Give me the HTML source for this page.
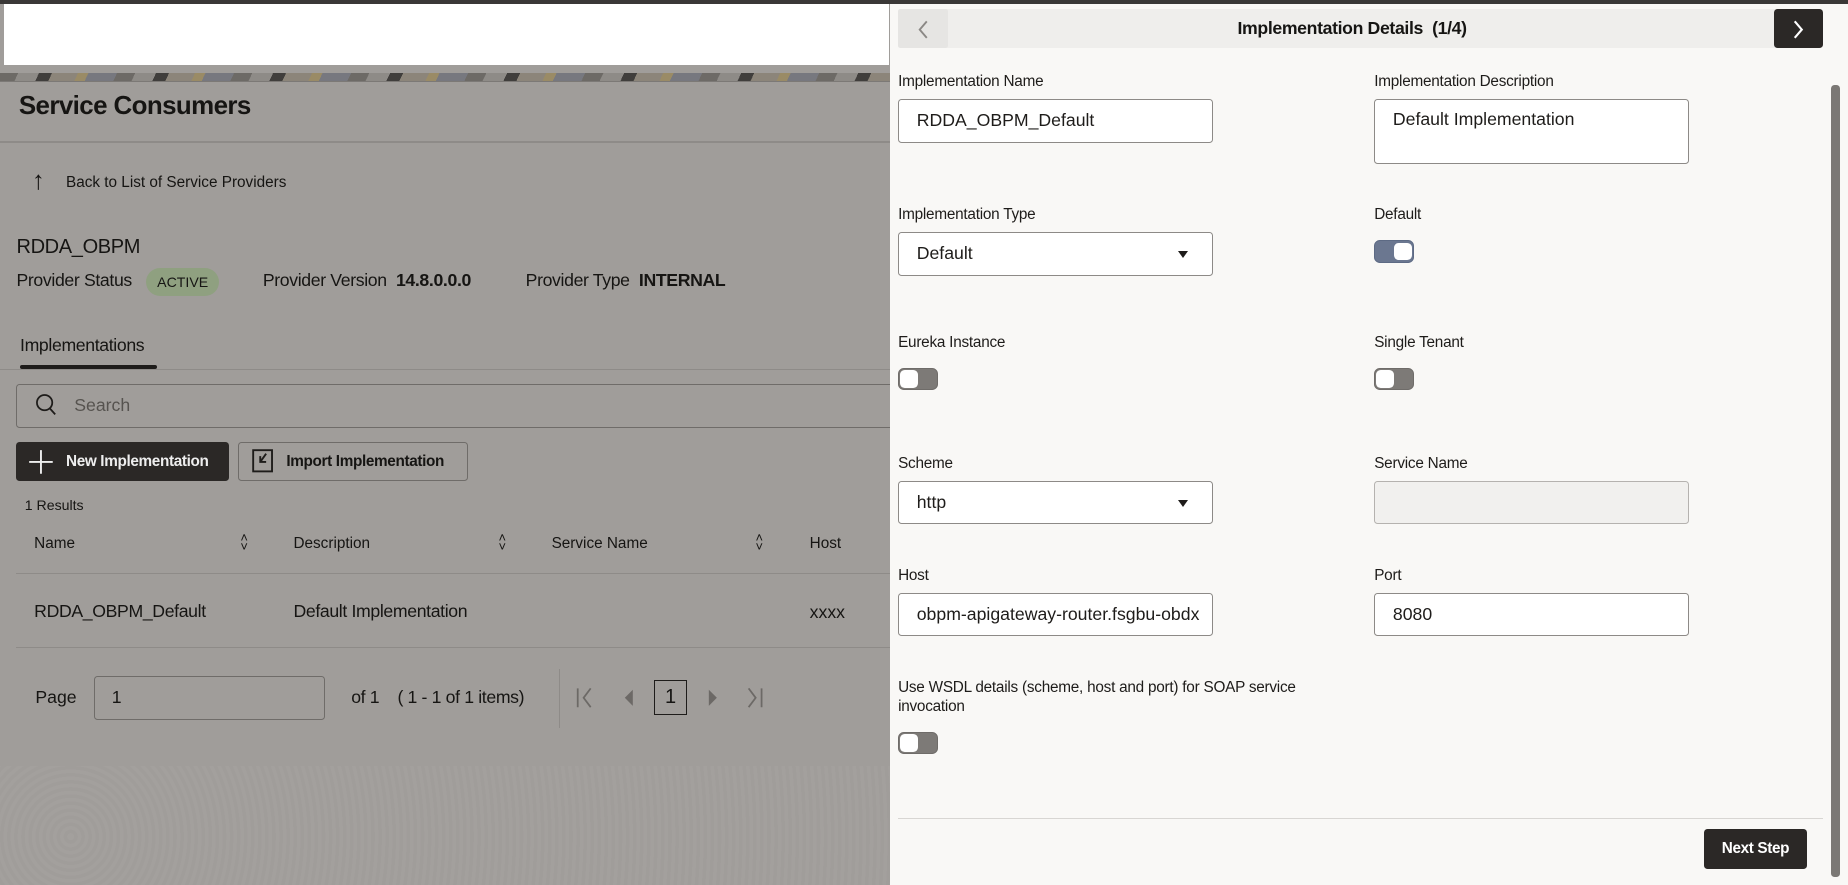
<!DOCTYPE html>
<html><head><meta charset="utf-8"><style>
html{zoom:1.17857}
*{box-sizing:border-box;margin:0;padding:0}
body{width:1568px;height:751px;overflow:hidden;position:relative;background:#a09d9a;font-family:"Liberation Sans",sans-serif;color:#161513}
.a{position:absolute}
.t{position:absolute;white-space:nowrap}
.lbl{font-size:13px;color:#1e1c1a;letter-spacing:-0.2px}
.inp{position:absolute;background:#fff;border:1px solid #8d8a87;border-radius:3px;font-size:15px;padding-left:15px;color:#1e1c1a;overflow:hidden;white-space:nowrap}
.tog{position:absolute;width:34px;height:19px;border-radius:5px;background:#7d7a77;border:1px solid #6f6c69}
.tog::after{content:"";position:absolute;left:1px;top:1px;width:15px;height:15px;border-radius:4px;background:#fff}
.tog.on{background:#6b7790;border-color:#5d6a84}
.tog.on::after{left:16px}
.caret{position:absolute;right:20px;top:15px;width:0;height:0;border-left:5px solid transparent;border-right:5px solid transparent;border-top:6px solid #1e1c1a}
</style></head><body>
<div class="a" style="left:0;top:0;width:1568px;height:3px;background:#3a3837"></div>
<div class="a" style="left:3px;top:3px;width:751px;height:52px;background:#fff"></div>
<div class="a" style="left:0;top:62px;width:755px;height:7px;background:repeating-linear-gradient(115deg,#6d6a66 0 14px,#8e8b87 14px 30px,#403e3c 30px 40px,#8c857a 40px 60px,#9a8b66 60px 68px,#77787f 68px 90px)"></div>
<div class="a" style="left:0;top:69px;width:755px;height:1px;background:#7c7976"></div>
<div class="a" style="left:0;top:650px;width:755px;height:101px;background:repeating-radial-gradient(circle at 60px 60px,#a3a09d 0 3px,#a09d9a 3px 6px)"></div>
<div class="t" style="left:16px;top:78px;font-size:22px;font-weight:bold;letter-spacing:-0.5px">Service Consumers</div>
<div class="a" style="left:0;top:120px;width:755px;height:1px;background:#8e8b88"></div>
<div class="t" style="left:27px;top:142px;font-size:22px">↑</div>
<div class="t" style="left:56px;top:148px;font-size:13px">Back to List of Service Providers</div>
<div class="t" style="left:14px;top:200px;font-size:17px;letter-spacing:-0.3px">RDDA_OBPM</div>
<div class="t" style="left:14px;top:229px;font-size:15px;letter-spacing:-0.3px">Provider Status</div>
<div class="a" style="left:124px;top:227px;width:62px;height:24px;border-radius:12px;background:#8fa080;font-size:12px;text-align:center;line-height:24px">ACTIVE</div>
<div class="t" style="left:223px;top:229px;font-size:15px;letter-spacing:-0.3px">Provider Version <b style="margin-left:4px">14.8.0.0.0</b></div>
<div class="t" style="left:446px;top:229px;font-size:15px;letter-spacing:-0.3px">Provider Type <b style="margin-left:4px">INTERNAL</b></div>
<div class="t" style="left:17px;top:284px;font-size:15px;letter-spacing:-0.3px">Implementations</div>
<div class="a" style="left:17px;top:310px;width:116px;height:3px;background:#1e1c1a;border-radius:2px"></div>
<div class="a" style="left:0;top:313px;width:755px;height:1px;background:#8e8b88"></div>
<div class="a" style="left:14px;top:326px;width:745px;height:37px;border:1px solid #6f6c69;border-radius:3px"></div>
<svg class="a" style="left:29px;top:333px" width="20" height="22" viewBox="0 0 20 22"><circle cx="9" cy="9" r="6.5" fill="none" stroke="#1e1c1a" stroke-width="1.5"/><path d="M13.5 14l4.5 5" stroke="#1e1c1a" stroke-width="1.5"/></svg>
<div class="t" style="left:63px;top:335px;font-size:15px;color:#56534f">Search</div>
<div class="a" style="left:14px;top:375px;width:180px;height:33px;background:#2b2826;border-radius:3px"></div>
<svg class="a" style="left:24px;top:381px" width="22" height="22"><path d="M11 1v20M1 11h20" stroke="#eee" stroke-width="1.6"/></svg>
<div class="t" style="left:56px;top:384px;font-size:13px;color:#eee;font-weight:bold;letter-spacing:-0.3px">New Implementation</div>
<div class="a" style="left:202px;top:375px;width:195px;height:33px;border:1px solid #6f6c69;border-radius:3px"></div>
<svg class="a" style="left:214px;top:381px" width="20" height="22" viewBox="0 0 20 22"><rect x="1" y="1" width="16" height="18" fill="none" stroke="#1e1c1a" stroke-width="1.6"/><path d="M12 4L7 11M7 6v5h5" stroke="#1e1c1a" stroke-width="1.6" fill="none"/></svg>
<div class="t" style="left:243px;top:384px;font-size:13px;font-weight:bold;letter-spacing:-0.3px">Import Implementation</div>
<div class="t" style="left:21px;top:422px;font-size:12px">1 Results</div>
<div class="t" style="left:29px;top:454px;font-size:13px">Name</div>
<div class="t" style="left:249px;top:454px;font-size:13px">Description</div>
<div class="t" style="left:468px;top:454px;font-size:13px">Service Name</div>
<div class="t" style="left:687px;top:454px;font-size:13px">Host</div>
<div class="t" style="left:204px;top:452px;font-size:11px;line-height:8px">˄<br>˅</div>
<div class="t" style="left:423px;top:452px;font-size:11px;line-height:8px">˄<br>˅</div>
<div class="t" style="left:641px;top:452px;font-size:11px;line-height:8px">˄<br>˅</div>
<div class="a" style="left:14px;top:486px;width:741px;height:1px;background:#8e8b88"></div>
<div class="t" style="left:29px;top:510px;font-size:15px;letter-spacing:-0.3px">RDDA_OBPM_Default</div>
<div class="t" style="left:249px;top:510px;font-size:15px;letter-spacing:-0.3px">Default Implementation</div>
<div class="t" style="left:687px;top:511px;font-size:15px">xxxx</div>
<div class="a" style="left:14px;top:549px;width:741px;height:1px;background:#8e8b88"></div>
<div class="t" style="left:30px;top:583px;font-size:15px">Page</div>
<div class="a" style="left:80px;top:574px;width:196px;height:37px;border:1px solid #6f6c69;border-radius:3px;font-size:15px;padding:8px 14px">1</div>
<div class="t" style="left:298px;top:583px;font-size:15px;letter-spacing:-0.3px">of 1 &nbsp;&nbsp; ( 1 - 1 of 1 items)</div>
<div class="a" style="left:474px;top:568px;width:1px;height:50px;background:#8e8b88"></div>
<svg class="a" style="left:486px;top:582px" width="170" height="20"><g stroke="#6c6966" stroke-width="1.5" fill="none"><path d="M4 2v16M15 2l-6 8 6 8"/><path d="M50 5l-5 5 5 5z" fill="#6c6966"/><path d="M116 5l5 5-5 5z" fill="#6c6966"/><path d="M149 2l6 8-6 8M160 2v16"/></g></svg>
<div class="a" style="left:555px;top:577px;width:28px;height:30px;border:1px solid #1e1c1a;font-size:17px;text-align:center;line-height:28px">1</div>

<div class="a" style="left:755px;top:3px;width:813px;height:748px;background:#f9f8f6"></div>
<div class="a" style="left:762px;top:8px;width:785px;height:33px;background:#efeeec;border-radius:2px"></div>
<div class="a" style="left:762px;top:8px;width:42px;height:33px;background:#e6e5e3;border-radius:2px"></div>
<svg class="a" style="left:776px;top:16px" width="14" height="18"><path d="M10 2L4 9l6 7" stroke="#8b8885" stroke-width="1.6" fill="none"/></svg>
<div class="t" style="left:1050px;top:15px;font-size:15px;font-weight:bold;letter-spacing:-0.3px">Implementation Details &nbsp;(1/4)</div>
<div class="a" style="left:1505px;top:8px;width:42px;height:33px;background:#2b2826;border-radius:3px"></div>
<svg class="a" style="left:1519px;top:16px" width="14" height="18"><path d="M4 2l6 7-6 7" stroke="#fff" stroke-width="1.8" fill="none"/></svg>
<div class="a" style="left:1554px;top:72px;width:7px;height:672px;background:#7b7875;border-radius:3px"></div>

<div class="t lbl" style="left:762px;top:62px">Implementation Name</div>
<div class="inp" style="left:762px;top:84px;width:267px;height:37px;line-height:35px">RDDA_OBPM_Default</div>
<div class="t lbl" style="left:1166px;top:62px">Implementation Description</div>
<div class="inp" style="left:1166px;top:84px;width:267px;height:55px;padding-top:8px">Default Implementation</div>

<div class="t lbl" style="left:762px;top:175px">Implementation Type</div>
<div class="inp" style="left:762px;top:197px;width:267px;height:37px;line-height:35px">Default<span class="caret"></span></div>
<div class="t lbl" style="left:1166px;top:175px">Default</div>
<div class="tog on" style="left:1166px;top:204px"></div>

<div class="t lbl" style="left:762px;top:283px">Eureka Instance</div>
<div class="tog" style="left:762px;top:312px"></div>
<div class="t lbl" style="left:1166px;top:283px">Single Tenant</div>
<div class="tog" style="left:1166px;top:312px"></div>

<div class="t lbl" style="left:762px;top:386px">Scheme</div>
<div class="inp" style="left:762px;top:408px;width:267px;height:37px;line-height:35px">http<span class="caret"></span></div>
<div class="t lbl" style="left:1166px;top:386px">Service Name</div>
<div class="inp" style="left:1166px;top:408px;width:267px;height:37px;background:#f1f0ee;border-color:#b5b2af"></div>

<div class="t lbl" style="left:762px;top:481px">Host</div>
<div class="inp" style="left:762px;top:503px;width:267px;height:37px;line-height:35px">obpm-apigateway-router.fsgbu-obdx</div>
<div class="t lbl" style="left:1166px;top:481px">Port</div>
<div class="inp" style="left:1166px;top:503px;width:267px;height:37px;line-height:35px">8080</div>

<div class="t lbl" style="left:762px;top:576px;line-height:16px">Use WSDL details (scheme, host and port) for SOAP service<br>invocation</div>
<div class="tog" style="left:762px;top:621px"></div>

<div class="a" style="left:762px;top:694px;width:785px;height:1px;background:#d8d6d3"></div>
<div class="a" style="left:1446px;top:703px;width:87px;height:34px;background:#2b2826;border-radius:3px;color:#fff;font-size:13px;font-weight:bold;text-align:center;line-height:34px;letter-spacing:-0.3px">Next Step</div>
</body></html>
